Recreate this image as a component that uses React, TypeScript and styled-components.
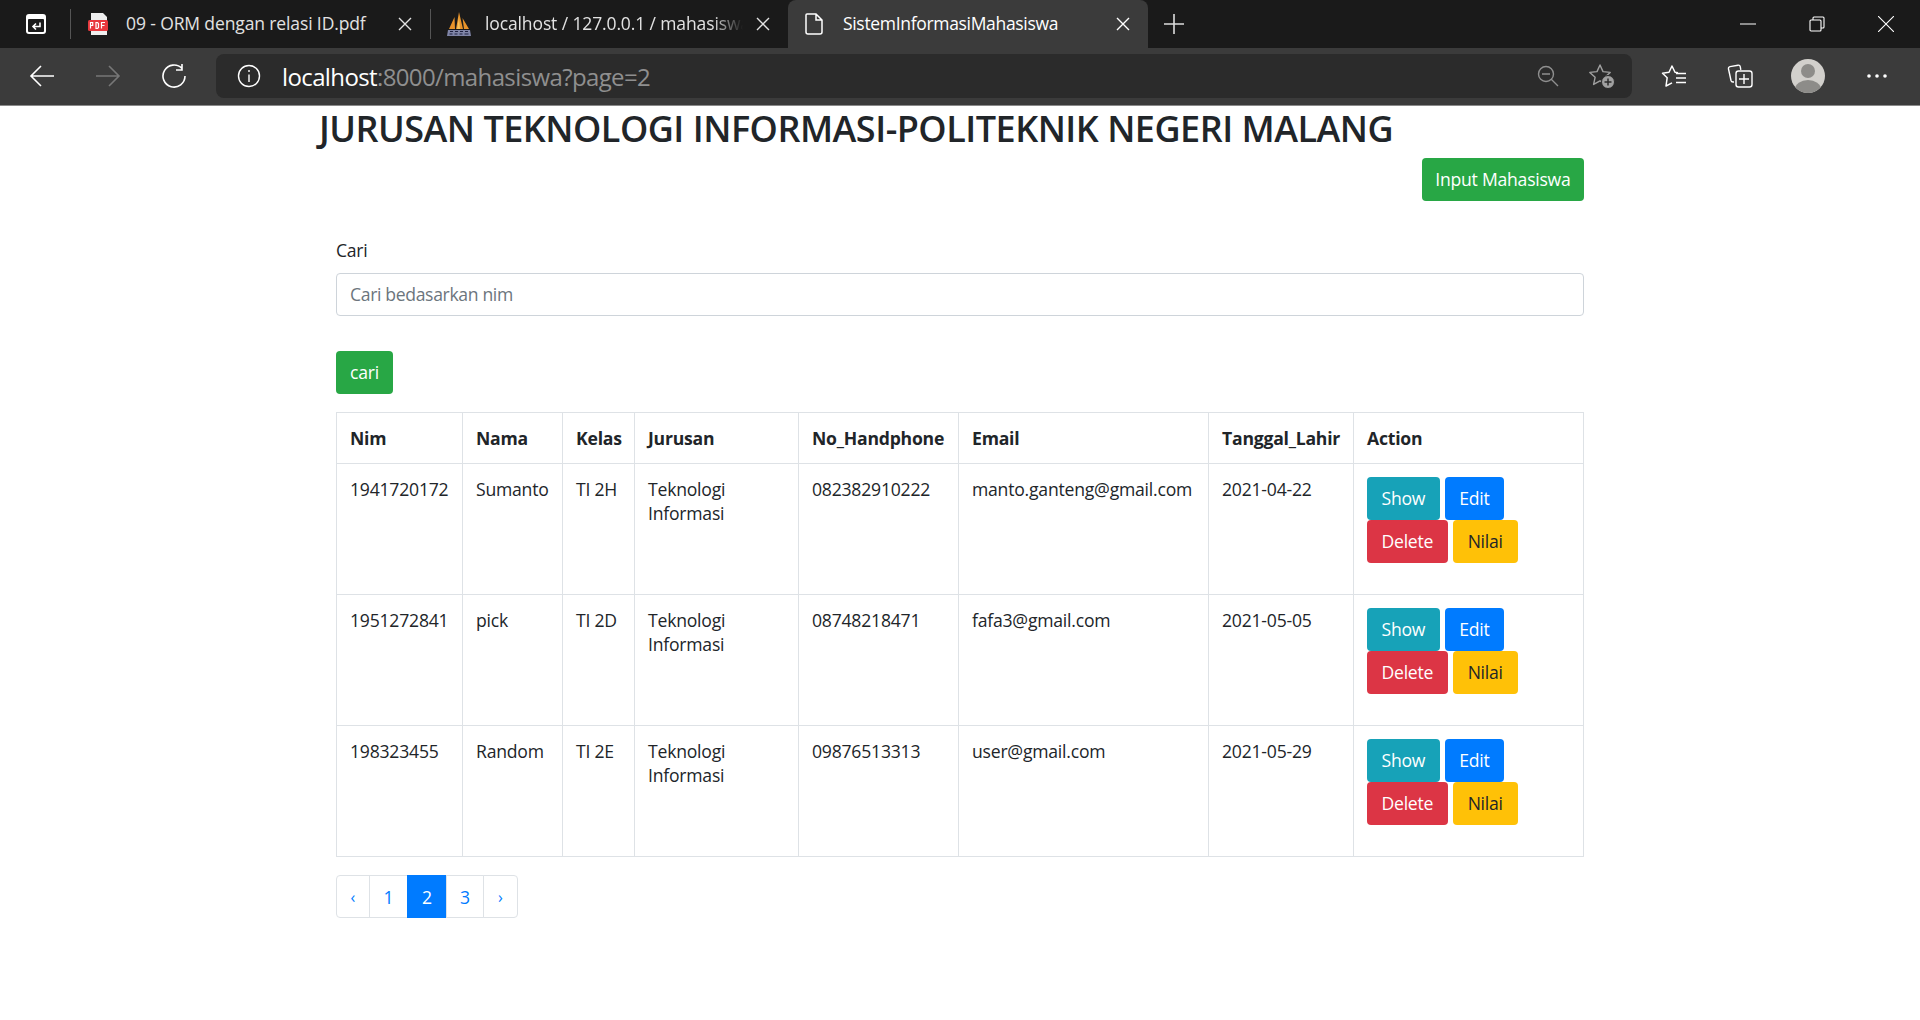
import React from "react";
import styled, { createGlobalStyle } from "styled-components";

const Global = createGlobalStyle`
  html, body { margin: 0; padding: 0; background: #fff; }
  body { font-family: "Open Sans", "Noto Sans", "Liberation Sans", sans-serif; font-size: 15.2px; color: #212529; }
  * { box-sizing: border-box; }
`;

const Page = styled.div`height: 1020px; overflow: hidden; display: flex; flex-direction: column;`;

const TabStrip = styled.div`height: 48px; background: #1a1a1a; display: flex; align-items: stretch; color: #fff; flex: none;`;
const TabAction = styled.div`width: 70px; padding-left: 2px; display: flex; align-items: center; justify-content: center;`;
const Separator = styled.div`width: 1px; height: 30px; background: #555; align-self: center; flex: none;`;
const Tab = styled.div<{ $width: number; $gap: number; $active?: boolean }>`
  width: ${p => p.$width}px; flex: none; display: flex; align-items: center; padding: 0 18px 0 16px; gap: ${p => p.$gap}px;
  background: ${p => (p.$active ? "#3b3b3b" : "transparent")};
  border-radius: ${p => (p.$active ? "8px 8px 0 0" : "0")};
  font-size: 17.5px; letter-spacing: ${p => (p.$active ? "-0.32px" : "-0.12px")}; color: ${p => (p.$active ? "#fff" : "#e2e2e2")};
`;
const TabTitle = styled.span<{ $fade?: boolean }>`
  flex: 1; white-space: nowrap; overflow: hidden; padding-bottom: 2px;
  ${p => p.$fade ? "-webkit-mask-image: linear-gradient(90deg,#000 88%,transparent);" : ""}
`;
const NewTab = styled.div`width: 52px; display: flex; align-items: center; justify-content: center;`;
const Spacer = styled.div`flex: 1;`;
const WindowButton = styled.div`width: 69px; display: flex; align-items: center; justify-content: center;`;

const Toolbar = styled.div`height: 58px; background: #3b3b3b; border-bottom: 1px solid #8a8a8a; display: flex; align-items: center; flex: none; padding-bottom: 1px; color: #fff;`;
const NavButton = styled.div`width: 66px; flex: none; display: flex; align-items: center; justify-content: center;`;
const NavGroup = styled.div`display: flex; padding-left: 9px; width: 216px; flex: none;`;
const AddressBar = styled.div`width: 1416px; height: 44px; flex: none; background: #2b2b2b; border-radius: 8px; display: flex; align-items: center; padding: 0 3px 0 21px;`;
const Address = styled.div`margin-left: 21px; font-size: 24px; letter-spacing: -0.62px; color: #8f8f8f; flex: 1; white-space: nowrap;`;
const Host = styled.span`color: #fff;`;
const AddressIcon = styled.div`width: 54px; display: flex; justify-content: center; align-items: center;`;
const ToolIcons = styled.div`display: flex; align-items: center; flex: 1; padding-left: 11px;`;
const ToolIcon = styled.div<{ $w: number }>`width: ${p => p.$w}px; display: flex; justify-content: center; align-items: center;`;

const Content = styled.div`flex: 1; width: 1248px; margin-left: 336px; position: relative;`;
const Title = styled.h2`
  margin: 0 0 0 -17px; font-size: 36px; line-height: 46px; font-weight: 600; white-space: nowrap; color: #212529; letter-spacing: -0.5px;
`;
const RightRow = styled.div`display: flex; justify-content: flex-end; margin-top: 6px;`;
const Button = styled.button<{ $bg: string; $fg?: string; $px?: number }>`
  font: inherit; font-size: 17.6px; letter-spacing: -0.25px; height: 43px; padding: 0 ${p => p.$px ?? 14.5}px 2px; border: 0; border-radius: 4px; background: ${p => p.$bg}; color: ${p => p.$fg || "#fff"};
  display: inline-flex; align-items: center; justify-content: center; white-space: nowrap;
`;
const Label = styled.label`display: block; margin-top: 36px; font-size: 17.6px; letter-spacing: -0.25px; line-height: 26px;`;
const SearchInput = styled.input`
  display: block; width: 100%; height: 43px; margin-top: 10px; border: 1px solid #ced4da; border-radius: 4px; padding: 0 13px 2px;
  font: inherit; font-size: 17.6px; letter-spacing: -0.35px; background: #fff;
  &::placeholder { color: #6c757d; opacity: 1; }
`;
const SubmitRow = styled.div`margin-top: 35px;`;
const Table = styled.table`
  margin-top: 18px; width: 1247px; table-layout: fixed; border-collapse: collapse; font-size: 17.6px; letter-spacing: -0.22px; line-height: 24px;
`;
const Th = styled.th`border: 1px solid #dee2e6; padding: 13px 13px 13px; height: 51px; text-align: left; font-weight: 700; white-space: nowrap;`;
const Td = styled.td`border: 1px solid #dee2e6; padding: 13px 13px 0; height: 131px; vertical-align: top;`;
const Actions = styled.div`display: flex; flex-wrap: wrap; column-gap: 5px; width: 170px;`;
const Pagination = styled.ul`list-style: none; display: flex; margin: 18px 0 0; padding: 0; height: 43px;`;
const PageItem = styled.li<{ $active?: boolean; $w: number; $small?: boolean }>`
  width: ${p => p.$w}px; margin-left: -1px; border: 1px solid ${p => (p.$active ? "#007bff" : "#dee2e6")}; display: flex; align-items: center; justify-content: center;
  font-size: ${p => (p.$small ? 16 : 17.6)}px; color: ${p => (p.$active ? "#fff" : "#007bff")}; background: ${p => (p.$active ? "#007bff" : "#fff")};
  &:first-child { margin-left: 0; border-radius: 4px 0 0 4px; }
  &:last-child { border-radius: 0 4px 4px 0; }
`;

const stroke = { fill: "none", stroke: "currentColor", strokeWidth: 1.4 } as const;
const X = ({ s = 14 }: { s?: number }) => (
  <svg width={s} height={s} viewBox="0 0 14 14" {...stroke} style={{ flex: "none" }}><path d="M1 1l12 12M13 1L1 13" /></svg>
);
const Arrow = ({ dir, color }: { dir: "l" | "r"; color: string }) => (
  <svg width="26" height="24" viewBox="0 0 26 24" fill="none" stroke={color} strokeWidth="1.6">
    {dir === "l" ? <path d="M25 12H2M12 2L2 12l10 10" /> : <path d="M1 12h23M14 2l10 10-10 10" />}
  </svg>
);
const columns = [126, 100, 72, 164, 160, 250, 145, 230];
const rows = [
  ["1941720172", "Sumanto", "TI 2H", "082382910222", "manto.ganteng@gmail.com", "2021-04-22"],
  ["1951272841", "pick", "TI 2D", "08748218471", "fafa3@gmail.com", "2021-05-05"],
  ["198323455", "Random", "TI 2E", "09876513313", "user@gmail.com", "2021-05-29"],
];

export default function App() {
  return (
    <Page>
      <Global />
      <TabStrip>
        <TabAction>
          <svg width="24" height="24" viewBox="0 0 24 24" fill="none">
            <rect x="2" y="2" width="20" height="20" rx="3" fill="#fff" />
            <rect x="4" y="7" width="16" height="13" rx="1" fill="#1a1a1a" />
            <path d="M16 10.500v4h-7M12 11.500l-3 3 3 3" stroke="#fff" strokeWidth="1.6" />
          </svg>
        </TabAction>
        <Separator />
        <Tab $width={359} $gap={17}>
          <svg width="22" height="24" viewBox="0 0 22 24" style={{ flex: "none" }}>
            <path d="M4 1h12l4 4v18H4z" fill="#eee" />
            <rect x="1" y="8" width="20" height="11" rx="1.500" fill="#e8383d" />
            <path d="M3.500 16.500v-6h2.200v3H3.500M9 10.500v6h1.500l1-1v-4l-1-1zM14.500 16.500v-6h3.500M14.500 13.500h3" stroke="#fff" strokeWidth="1.2" fill="none" />
          </svg>
          <TabTitle>09 - ORM dengan relasi ID.pdf</TabTitle>
          <X />
        </Tab>
        <Separator />
        <Tab $width={357} $gap={13}>
          <svg width="26" height="26" viewBox="0 0 26 26" style={{ flex: "none", marginLeft: -1 }}>
            <path d="M3 18L8.500 6 9 18zM10 18L13 1l4 17zM18 18l-1.500-11L23 18z" fill="#e8932a" />
            <path d="M11 18L13 6l1 12z" fill="#f8c35a" />
            <path d="M2 19h22l1 6H1z" fill="#7f84a6" />
            <path d="M4 20.500h3M9 20.500h3M14 20.500h3M19 20.500h3M3.500 23h3M8.500 23h3M13.500 23h3M18.500 23h4" stroke="#1f2140" strokeWidth="1" />
          </svg>
          <TabTitle $fade>localhost / 127.0.0.1 / mahasiswa</TabTitle>
          <X />
        </Tab>
        <Tab $width={360} $gap={15} $active>
          <svg width="20" height="24" viewBox="0 0 20 24" fill="none" stroke="#fff" strokeWidth="1.5" style={{ flex: "none", marginRight: 4 }}>
            <path d="M3 2h9l6 6v12a2 2 0 0 1-2 2H4a2 2 0 0 1-2-2V3a1 1 0 0 1 1-1zM12 2v6h6" />
          </svg>
          <TabTitle>SistemInformasiMahasiswa</TabTitle>
          <X />
        </Tab>
        <NewTab>
          <svg width="22" height="22" viewBox="0 0 22 22" stroke="#ddd" strokeWidth="1.6"><path d="M11 1v20M1 11h20" /></svg>
        </NewTab>
        <Spacer />
        <WindowButton>
          <svg width="16" height="2" viewBox="0 0 16 2" stroke="#fff"><path d="M0 1h16" /></svg>
        </WindowButton>
        <WindowButton>
          <svg width="16" height="16" viewBox="0 0 16 16" fill="none" stroke="#fff" strokeWidth="1.1"><rect x="1" y="4" width="11" height="11" rx="1" /><path d="M4 4V2a1 1 0 0 1 1-1h9a1 1 0 0 1 1 1v9a1 1 0 0 1-1 1h-2" /></svg>
        </WindowButton>
        <WindowButton>
          <svg width="16" height="16" viewBox="0 0 16 16" stroke="#fff" strokeWidth="1.1"><path d="M0 0l16 16M16 0L0 16" /></svg>
        </WindowButton>
      </TabStrip>
      <Toolbar>
        <NavGroup>
          <NavButton><Arrow dir="l" color="#fff" /></NavButton>
          <NavButton><Arrow dir="r" color="#777" /></NavButton>
          <NavButton>
            <svg width="26" height="26" viewBox="0 0 26 26" fill="none" stroke="#fff" strokeWidth="1.6"><path d="M21 5.500A11 11 0 1 0 24 13M21 1v6h-6" /></svg>
          </NavButton>
        </NavGroup>
        <AddressBar>
          <svg width="24" height="24" viewBox="0 0 24 24" fill="none" stroke="#fff" strokeWidth="1.4"><circle cx="12" cy="12" r="10.500" /><path d="M12 10.500V18M12 6v2" /></svg>
          <Address><Host>localhost</Host>:8000/mahasiswa?page=2</Address>
          <AddressIcon>
            <svg width="22" height="22" viewBox="0 0 22 22" fill="none" stroke="#8f8f8f" strokeWidth="1.4"><circle cx="9" cy="9" r="7.500" /><path d="M5 9h8M14 14l7 7" /></svg>
          </AddressIcon>
          <AddressIcon>
            <svg width="28" height="26" viewBox="0 0 28 26" fill="none" stroke="#a0a0a0" strokeWidth="1.4">
              <path d="M12 2l3 6.600 7.200.8-5.300 4.900 1.500 7.100-6.400-3.600-6.400 3.600 1.500-7.100L1.800 9.400 9 8.600z" strokeLinejoin="round" />
              <circle cx="20" cy="19" r="6.500" fill="#a0a0a0" stroke="#2b2b2b" strokeWidth="1" />
              <path d="M20 15.500v7M16.500 19h7" stroke="#2b2b2b" strokeWidth="1.5" />
            </svg>
          </AddressIcon>
        </AddressBar>
        <ToolIcons>
          <ToolIcon $w={62}>
            <svg width="26" height="24" viewBox="0 0 26 24" fill="none" stroke="#fff" strokeWidth="1.5" strokeLinejoin="round">
              <path d="M17 8.700L14 8.300 11 2 8 8.300 1.500 9.200l4.700 4.500L5 22l6-3.200" />
              <path d="M15 9.500h10M15 14h10M15 18.500h10" />
            </svg>
          </ToolIcon>
          <ToolIcon $w={70}>
            <svg width="26" height="26" viewBox="0 0 26 26" fill="none" stroke="#fff" strokeWidth="1.4"><path d="M7 19l-1 0a2 2 0 0 1-2-1.500L1.500 6a2 2 0 0 1 1.500-2.400l8-1.400a2 2 0 0 1 2.300 1.600l.5 3" /><rect x="9" y="8" width="16" height="16" rx="2.500" /><path d="M17 11v10M12 16h10" /></svg>
          </ToolIcon>
          <ToolIcon $w={66}>
            <svg width="34" height="34" viewBox="0 0 34 34"><defs><clipPath id="avatar"><circle cx="17" cy="17" r="17" /></clipPath></defs><g clipPath="url(#avatar)"><rect width="34" height="34" fill="#d2d0cc" /><circle cx="17" cy="12" r="7" fill="#8d8c89" /><ellipse cx="17" cy="30" rx="13" ry="9" fill="#8d8c89" /></g></svg>
          </ToolIcon>
          <ToolIcon $w={71}>
            <svg width="20" height="4" viewBox="0 0 20 4" fill="#fff"><circle cx="2" cy="2" r="1.800" /><circle cx="10" cy="2" r="1.800" /><circle cx="18" cy="2" r="1.800" /></svg>
          </ToolIcon>
        </ToolIcons>
      </Toolbar>
      <Content>
        <Title>JURUSAN TEKNOLOGI INFORMASI-POLITEKNIK NEGERI MALANG</Title>
        <RightRow><Button $bg="#28a745" $px={13.5}>Input Mahasiswa</Button></RightRow>
        <Label>Cari</Label>
        <SearchInput placeholder="Cari bedasarkan nim" readOnly />
        <SubmitRow><Button $bg="#28a745" $px={14}>cari</Button></SubmitRow>
        <Table>
          <colgroup>{columns.map((w, i) => <col key={i} width={w} />)}</colgroup>
          <thead>
            <tr>
              {["Nim", "Nama", "Kelas", "Jurusan", "No_Handphone", "Email", "Tanggal_Lahir", "Action"].map(h => <Th key={h}>{h}</Th>)}
            </tr>
          </thead>
          <tbody>
            {rows.map(r => (
              <tr key={r[0]}>
                <Td>{r[0]}</Td><Td>{r[1]}</Td><Td>{r[2]}</Td>
                <Td>Teknologi Informasi</Td>
                <Td>{r[3]}</Td><Td>{r[4]}</Td><Td>{r[5]}</Td>
                <Td>
                  <Actions>
                    <Button $bg="#17a2b8">Show</Button>
                    <Button $bg="#007bff">Edit</Button>
                    <Button $bg="#dc3545">Delete</Button>
                    <Button $bg="#ffc107" $fg="#212529" $px={15}>Nilai</Button>
                  </Actions>
                </Td>
              </tr>
            ))}
          </tbody>
        </Table>
        <Pagination>
          <PageItem $w={34} $small>‹</PageItem>
          <PageItem $w={39}>1</PageItem>
          <PageItem $w={40} $active>2</PageItem>
          <PageItem $w={38}>3</PageItem>
          <PageItem $w={35} $small>›</PageItem>
        </Pagination>
      </Content>
    </Page>
  );
}
